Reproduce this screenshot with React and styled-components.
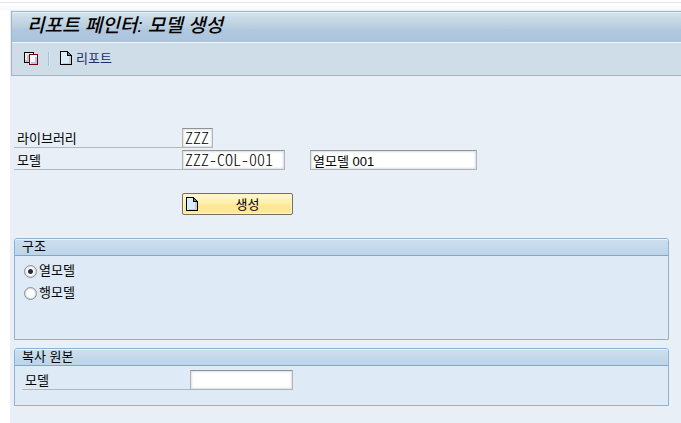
import React, { useState } from 'react'
import styled, { createGlobalStyle } from 'styled-components'

const GlobalStyle = createGlobalStyle`
* {
    box-sizing: border-box;
}
body {
    margin: 0;
    background: #fff;
    color: #000;
    font: 13px/18px 'Liberation Sans', 'Noto Sans CJK KR', sans-serif;
}
button, input {
    font: inherit;
    color: inherit;
}
`;

function CopyIcon() {
    return (
        <svg width='16' height='16' viewBox='0 0 16 16' shapeRendering='crispEdges' aria-hidden='true'>
            <rect x='0' y='1' width='10' height='11' fill='#000' />
            <rect x='1' y='2' width='8' height='9' fill='#e9eef2' />
            <path d='M3 4h2v7h-4v-2h2z' fill='#c4c4cc' />
            <rect x='5' y='3' width='9' height='11' fill='#7d0000' />
            <rect x='6' y='4' width='7' height='9' fill='#f4f9fe' />
            <path d='M11 6h2v7h-6v-2h4z' fill='#b4c6e6' />
        </svg>
    )
}

function PageIcon() {
    return (
        <svg width='16' height='16' viewBox='0 0 16 16' shapeRendering='crispEdges' aria-hidden='true'>
            <path d='M2 0h8v1h1v1h1v1h1v1h1v10h-12z' fill='#000' />
            <path d='M3 1h6v4h4v8h-10z' fill='#d9eefa' />
            <path d='M11 5h2v8h-8v-1h6z' fill='#c3cdd8' />
            <path d='M10 2h1v1h1v1h-2z' fill='#6f9084' />
        </svg>
    )
}

function App() {
    const [library, setLibrary] = useState('ZZZ');
    const [model, setModel] = useState('ZZZ-COL-001');
    const [description, setDescription] = useState('열모델 001');
    const [structure, setStructure] = useState('column');
    const [source, setSource] = useState('');

    return (
        <>
            <GlobalStyle />
            <TopStrip />
            <Window>
                <Header>
                    <Title>리포트 페인터: 모델 생성</Title>
                    <Toolbar>
                        <ToolButton type='button' aria-label='복사'><CopyIcon /></ToolButton>
                        <Divider />
                        <ToolButton type='button'><PageIcon />리포트</ToolButton>
                    </Toolbar>
                </Header>
                <Form onSubmit={(e) => e.preventDefault()}>
                    <Row>
                        <Label htmlFor='library'>라이브러리</Label>
                        <Field id='library' $width={31} $code value={library}
                            onChange={(e) => setLibrary(e.target.value)} />
                    </Row>
                    <Row>
                        <Label htmlFor='model'>모델</Label>
                        <Field id='model' $width={103} $code value={model}
                            onChange={(e) => setModel(e.target.value)} />
                        <DescriptionField $width={167} aria-label='모델 내역' value={description}
                            onChange={(e) => setDescription(e.target.value)} />
                    </Row>
                    <CreateButton type='submit'>
                        <PageIcon />
                        <span>생성</span>
                    </CreateButton>

                    <Group aria-labelledby='structure-title'>
                        <GroupTitle id='structure-title'>구조</GroupTitle>
                        <RadioList role='radiogroup' aria-labelledby='structure-title'>
                            <RadioLabel>
                                <Radio name='structure' checked={structure === 'column'}
                                    onChange={() => setStructure('column')} />
                                열모델
                            </RadioLabel>
                            <RadioLabel>
                                <Radio name='structure' checked={structure === 'row'}
                                    onChange={() => setStructure('row')} />
                                행모델
                            </RadioLabel>
                        </RadioList>
                    </Group>

                    <Group aria-labelledby='source-title'>
                        <GroupTitle id='source-title'>복사 원본</GroupTitle>
                        <GroupBody>
                            <Row>
                                <Label htmlFor='source'>모델</Label>
                                <Field id='source' $width={103} $code value={source}
                                    onChange={(e) => setSource(e.target.value)} />
                            </Row>
                        </GroupBody>
                    </Group>
                </Form>
            </Window>
        </>
    )
}

const TopStrip = styled.div`
    height: 8px;
    margin-top: 2px;
    border-top: 1px solid #dfe3ee;
    background: linear-gradient(#fff, #f6f8fb);
`;

const Window = styled.main`
    min-height: calc(100vh - 10px);
    margin-left: 10px;
    padding: 1px 0 0 1px;
    background: #e8eff6;
`;

const Header = styled.header`
    border: solid #a3b4c8;
    border-width: 1px 0 1px 1px;
    background: #cfdde8;
`;

const Title = styled.h1`
    margin: 0;
    padding: 0 15px 4px;
    border-top: 1px solid #e6f0f7;
    border-bottom: 1px solid #eef4f8;
    background: linear-gradient(#d2e2ed, #b9cddd 50%, #b0c8df 58%, #acc3dc);
    font-size: 19px;
    line-height: 25px;
    font-weight: 500;
    font-style: italic;
`;

const Toolbar = styled.div`
    display: flex;
    align-items: center;
    height: 32px;
    padding: 0 12px 1px;
    gap: 8px;
`;

const ToolButton = styled.button`
    display: flex;
    align-items: center;
    gap: 2px;
    padding: 0;
    border: 0;
    background: none;
    color: #1c2f68;
`;

const Divider = styled.span`
    width: 2px;
    height: 14px;
    border-left: 1px solid #a5bfdc;
    border-right: 1px solid #dce8f2;
`;

const Form = styled.form`
    display: flex;
    flex-direction: column;
    padding: 52px 12px 16px 3px;
`;

const Row = styled.div`
    display: flex;
    margin-bottom: 2px;
`;

const Label = styled.label`
    width: 168px;
    height: 20px;
    padding-left: 3px;
    border-bottom: 1px solid #b3b8bd;
    line-height: 22px;
`;

const Field = styled.input.attrs({ type: 'text', autoComplete: 'off', spellCheck: false })`
    width: ${(props) => props.$width}px;
    height: 20px;
    padding: 0 2px;
    border: 1px solid #b0b4b8;
    border-top-color: #909498;
    outline: none;
    background: #fff;
    box-shadow: inset 0 0 2px 1px #dcdfe2;
    ${(props) => props.$code && `
        padding-bottom: 2px;
        font-family: 'Noto Sans CJK KR', sans-serif;
        font-size: 16px;
        line-height: 16px;
        font-weight: 300;
        font-feature-settings: 'hwid';
    `}
`;

const DescriptionField = styled(Field)`
    margin-left: 25px;
`;

const CreateButton = styled.button`
    display: flex;
    align-items: center;
    width: 111px;
    height: 22px;
    margin: 21px 0 23px 168px;
    padding: 1px 1px 0;
    border: 1px solid #77705f;
    border-radius: 2px;
    background: linear-gradient(#fff8d8, #fdeeaa 45%, #fde793 60%, #fdeaa0);
    box-shadow: inset 0 0 0 1px #fff3c0;
    span {
        flex: 1;
        padding-left: 4px;
    }
`;

const Group = styled.section`
    margin-bottom: 8px;
    border: 1px solid #8fb2d3;
    border-radius: 3px 3px 0 0;
    background: #deeaf5;
`;

const GroupTitle = styled.h2`
    height: 17px;
    margin: 0;
    padding-left: 7px;
    border-top: 1px solid #eaf4fa;
    border-bottom: 1px solid #85a5c8;
    border-radius: 2px 2px 0 0;
    background: linear-gradient(#cbdeee, #bdd5e8);
    font-size: 13px;
    line-height: 14px;
    font-weight: 400;
`;

const GroupBody = styled.div`
    padding: 4px 7px 13px;
`;

const RadioList = styled.div`
    display: flex;
    flex-direction: column;
    align-items: flex-start;
    gap: 4px;
    padding: 6px 9px 37px;
`;

const RadioLabel = styled.label`
    display: flex;
    align-items: center;
    gap: 2px;
`;

const Radio = styled.input.attrs({ type: 'radio' })`
    appearance: none;
    width: 13px;
    height: 13px;
    margin: 0;
    border: 1px solid #8c9094;
    border-radius: 50%;
    background: #fff;
    box-shadow: inset 0 0 1px 1px #d5d8dc;
    &:checked {
        background: radial-gradient(circle, #2b2b48 2px, #fff 3px);
    }
`;

export default App
